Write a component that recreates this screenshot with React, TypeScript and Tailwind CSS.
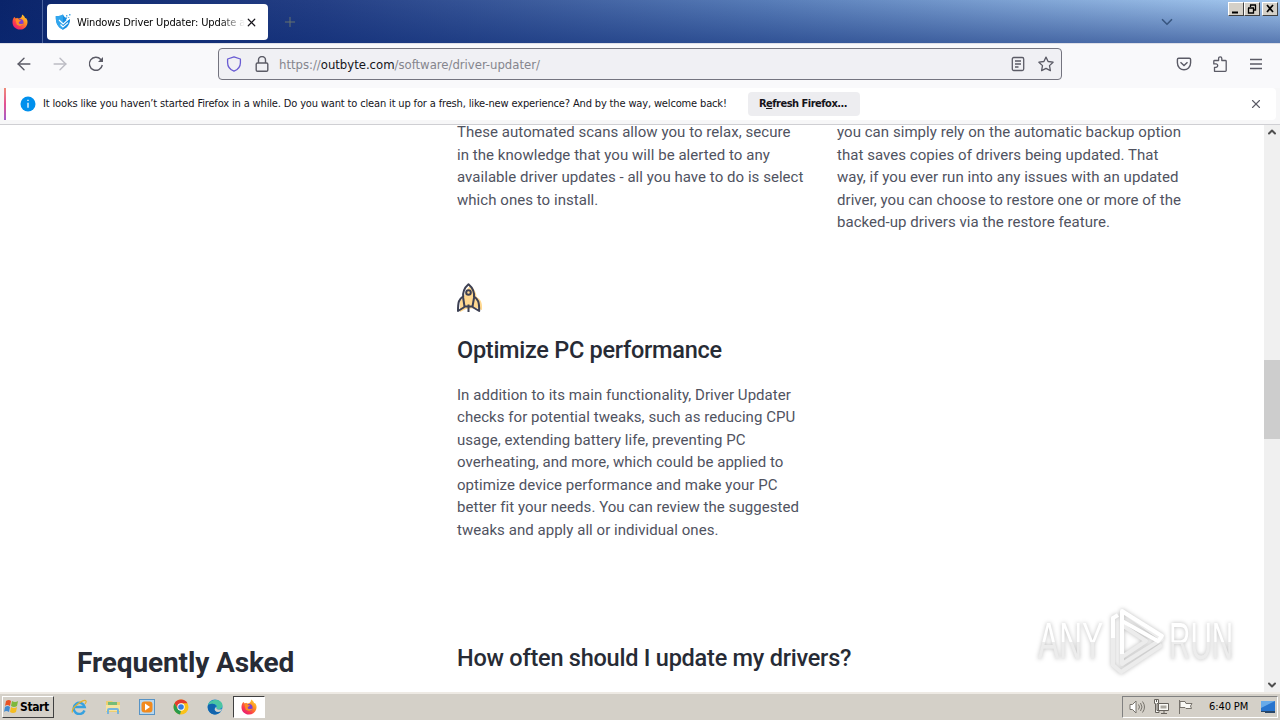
import type { ReactNode } from "react";
import { ArrowLeft, ArrowRight, ChevronDown, ChevronUp, Plus, X } from "lucide-react";

const scans = [
  "These automated scans allow you to relax, secure",
  "in the knowledge that you will be alerted to any",
  "available driver updates - all you have to do is select",
  "which ones to install.",
];

const backups = [
  "you can simply rely on the automatic backup option",
  "that saves copies of drivers being updated. That",
  "way, if you ever run into any issues with an updated",
  "driver, you can choose to restore one or more of the",
  "backed-up drivers via the restore feature.",
];

const performance = [
  "In addition to its main functionality, Driver Updater",
  "checks for potential tweaks, such as reducing CPU",
  "usage, extending battery life, preventing PC",
  "overheating, and more, which could be applied to",
  "optimize device performance and make your PC",
  "better fit your needs. You can review the suggested",
  "tweaks and apply all or individual ones.",
];

function Lines({ lines }: { lines: string[] }) {
  return (
    <p className="whitespace-nowrap text-[15px] leading-[22.5px] tracking-[0.045px] text-[#50535f]">
      {lines.map((line) => (
        <span key={line} className="block">{line}</span>
      ))}
    </p>
  );
}

function FirefoxIcon({ className }: { className?: string }) {
  return (
    <svg viewBox="0 0 16 16" className={className}>
      <defs>
        <linearGradient id="flame" x1="1" y1="0" x2="0.2" y2="1">
          <stop offset="0" stopColor="#ffe23d" />
          <stop offset="0.4" stopColor="#ff9320" />
          <stop offset="0.75" stopColor="#fb3a4e" />
          <stop offset="1" stopColor="#e3177d" />
        </linearGradient>
      </defs>
      <path d="M2.4 3.1 3.8 4.6 5.2 3.8 6 4.6 8 4.2 9.5 2.9 10.2 0.5C12.2 1.7 12.6 3 13.2 4.3L14 4C15.2 5.6 15.7 7 15.5 8.7 15.1 12.7 12 15.6 8 15.6 3.8 15.6.5 12.5.5 8.3.5 6.3 1.1 4.4 2.4 3.1Z" fill="url(#flame)" />
      <circle cx="8" cy="8.6" r="3.5" fill="#7b3fd0" />
      <path d="M3.5 5.2C5 4.5 6.7 5 7.4 6L9.3 6.5 7.2 7.7C6.4 8.3 6.6 9.7 8.1 10 9.3 10.3 10.3 9.4 11.5 9.8 10.3 12.4 6.5 12.8 4.5 10.3Z" fill="#ff8a24" />
    </svg>
  );
}

function WindowButton({ children, className = "" }: { children: ReactNode; className?: string }) {
  return (
    <div className={`h-[14px] border border-t-white border-l-white border-r-[#404040] border-b-[#404040] bg-[#d4d0c8] ${className}`}>
      <svg viewBox="0 0 14 12" className="h-3 w-[14px]" fill="none" stroke="#000">{children}</svg>
    </div>
  );
}

function TitleBar() {
  return (
    <div className="flex h-[43px] bg-[linear-gradient(to_bottom,transparent,rgba(10,40,115,0.5)),linear-gradient(to_right,#0a246a,#243f85_25%,#587db8_60%,#a6caf0)]">
      <div className="flex w-[43px] items-center justify-center border-r border-[#4c65a0] pr-[3px]">
        <FirefoxIcon className="size-4" />
      </div>
      <div className="mt-1 ml-1 flex h-9 w-[221px] items-center rounded bg-white pl-2">
        <svg viewBox="0 0 16 16" className="size-4 shrink-0">
          <path d="M8 .5C5.8 1.9 3.4 2.3.8 2.1.6 7.7 1.8 13 8 15.7 14 13.1 15.2 8.2 15 5L12.5 6.5 11 5.8 12.4 3.6 10.3 3.5 9.2 2.5Z" fill="#188ee2" />
          <path d="M8 15.7V.5C5.8 1.9 3.4 2.3.8 2.1.6 7.7 1.8 13 8 15.7Z" fill="#31a6ee" />
          <path d="m4 6 4.2 4L14 4.7M5.5 10.5 8 13l5-4.4" fill="none" stroke="#fff" strokeWidth="1.1" />
          <path d="M11 1h1.4v1.4H11zM14 0h1.5v1.5H14zM13.2 3h1v1h-1z" fill="#4eabe8" />
        </svg>
        <span className="mt-[3px] ml-[6px] w-[168px] overflow-hidden bg-[linear-gradient(to_right,#000_85%,transparent)] bg-clip-text font-['DejaVu_Sans_Condensed','Noto_Sans',sans-serif] text-[11px] tracking-[-0.12px] whitespace-nowrap text-transparent">
          Windows Driver Updater: Update a
        </span>
        <X className="size-[13px] shrink-0 text-[#15141a]" strokeWidth={2.2} />
      </div>
      <Plus className="mt-[14px] ml-[14px] size-4 text-[#66736e]" strokeWidth={1.5} />
      <ChevronDown className="mt-[13px] ml-auto size-[18px] text-[#395780]" strokeWidth={2.2} />
      <div className="mt-[2px] mr-[2px] ml-[52px] flex">
        <WindowButton className="w-4"><path d="M3 9.5h6" strokeWidth="2" /></WindowButton>
        <WindowButton className="w-4"><path d="M5 2h6M5.5 2v2M10.5 2v5H9M3 5h6M3.5 5v5h5V5" strokeWidth="1.3" /></WindowButton>
        <WindowButton className="ml-[2px] w-4"><path d="m4 2 6 7M10 2 4 9" strokeWidth="1.7" /></WindowButton>
      </div>
    </div>
  );
}

function Toolbar() {
  return (
    <div className="flex h-[45px] items-center border-t border-[#dedfe7] bg-[#f9f9fb] pb-1 text-[#5b5b66]">
      <ArrowLeft className="ml-[14px] size-5" strokeWidth={1.7} />
      <ArrowRight className="ml-4 size-5 text-[#bcbcc4]" strokeWidth={1.7} />
      <svg viewBox="0 0 16 16" className="ml-[18px] size-4" fill="none" stroke="currentColor" strokeWidth="1.4">
        <path d="M14.3 9A6.5 6.5 0 1 1 12.8 3.5L14 5" />
        <path d="M15 1v5h-5Z" fill="currentColor" stroke="none" />
      </svg>
      <div className="ml-[114px] flex h-8 w-[844px] items-center rounded border border-[#74747f] bg-[#f0f0f4] pl-[7px]">
        <svg viewBox="0 0 16 16" className="size-4" fill="none" stroke="#695bd3" strokeWidth="1.3">
          <path d="M8 .8 14.4 3v3.7c0 4.1-3 7.1-6.4 8.5-3.4-1.4-6.4-4.4-6.4-8.5V3Z" strokeLinejoin="round" />
        </svg>
        <svg viewBox="0 0 16 16" className="ml-3 size-4" fill="none" stroke="currentColor" strokeWidth="1.4">
          <rect x="2.2" y="7" width="11.6" height="8.2" rx="1.3" />
          <path d="M4.5 7V4a3.5 3.5 0 0 1 7 0v3" />
        </svg>
        <span className="mt-[2px] ml-[9px] font-['DejaVu_Sans_Condensed','Noto_Sans',sans-serif] text-[13px] tracking-[-0.02px] whitespace-nowrap text-[#85858d]">
          https://<span className="text-[#15141a]">outbyte.com</span>/software/driver-updater/
        </span>
        <svg viewBox="0 0 16 16" className="ml-auto size-4" fill="none" stroke="currentColor" strokeWidth="1.3">
          <rect x="2.3" y="1.5" width="11.4" height="13" rx="1.5" />
          <path d="M5 5h6M5 8h6M5 11h3.5" />
        </svg>
        <svg viewBox="0 0 16 16" className="mr-[7px] ml-3 size-4" fill="none" stroke="currentColor" strokeWidth="1.3">
          <path d="m8 1.1 2.1 4.4 5 .7-3.6 3.4.9 5L8 12.3l-4.4 2.3.9-5L.9 6.2l5-.7Z" strokeLinejoin="round" />
        </svg>
      </div>
      <svg viewBox="0 0 16 16" className="ml-[114px] size-4" fill="none" stroke="currentColor" strokeWidth="1.4">
        <path d="M2.7 2.3h10.6c.8 0 1.3.5 1.3 1.2v3.2c0 9.4-13.2 9.4-13.2 0V3.5c0-.7.5-1.2 1.3-1.2Z" />
        <path d="m4.5 6.2 3.5 3.4 3.5-3.4" />
      </svg>
      <svg viewBox="0 0 16 16" className="ml-5 size-4" fill="none" stroke="currentColor" strokeWidth="1.3">
        <path d="M2.5 15.3v-4H4a1.7 1.7 0 1 0 0-3.4H1.8V5.3c0-.5.3-.8.8-.8h4V2.4a1.6 1.6 0 0 1 3.2 0v2.1h3.6c.5 0 .8.3.8.8v9.2c0 .5-.3.8-.8.8Z" strokeLinejoin="round" />
      </svg>
      <svg viewBox="0 0 16 16" className="ml-5 size-4" stroke="currentColor" strokeWidth="1.3">
        <path d="M2 3.5h12M2 8h12M2 12.5h12" />
      </svg>
    </div>
  );
}

function Notification() {
  return (
    <div className="h-[37px] border-b border-[#cfcfd3] bg-[#f7f7f8] pr-1 pl-1">
      <div className="flex h-8 items-center rounded-r bg-white font-['DejaVu_Sans_Condensed','Noto_Sans',sans-serif] text-[11px] whitespace-nowrap text-[#15141a]">
        <div className="h-8 w-[2px] bg-linear-to-b from-[#ef8b78] via-[#e35091] to-[#a35ac9]" />
        <svg viewBox="0 0 16 16" className="ml-[14px] size-4">
          <circle cx="8" cy="8" r="7.5" fill="#0090ed" />
          <path d="M8 6.7v5M8 3.7v1.4" stroke="#fff" strokeWidth="1.3" />
        </svg>
        <span className="ml-[7px] w-[705px] tracking-[-0.15px]">
          It looks like you haven’t started Firefox in a while. Do you want to clean it up for a fresh, like-new experience? And by the way, welcome back!
        </span>
        <button className="h-6 w-[112px] rounded bg-[#ededf0] pr-[2px] font-bold tracking-[-0.5px]">
          R<span className="underline">e</span>fresh Firefox...
        </button>
        <X className="mr-[13px] ml-auto size-[14px] text-[#5b5b66]" strokeWidth={1.9} />
      </div>
    </div>
  );
}

function Rocket() {
  return (
    <svg viewBox="0 0 28 32" className="mt-px h-8 w-7" strokeLinejoin="round">
      <path d="M14 4c3.5 3 5.5 7 5.5 11 4.5 2.5 6 6 5.5 13l-6-2-10 1-6 3V19l4-4C8 10 10 6 14 4Z" fill="#ffd890" />
      <g fill="none" stroke="#3d4053" strokeWidth="2">
        <path d="M11.5 2.2C7 6 5.5 10.5 6.2 16L7.5 24.5H15.5L17 16C17.7 10.5 16 6 11.5 2.2Z" />
        <path d="M6 14.5C1.8 17.3 1 20 1 29L7.5 25M17 14.5C21.3 17.3 22.2 20 22.2 29L15.5 25M11.5 22.5V30" />
        <circle cx="11.5" cy="10.5" r="2.3" />
      </g>
    </svg>
  );
}

function Watermark() {
  return (
    <div className="absolute top-[479px] left-[1038px] flex h-[74px] w-[196px] items-center font-['Liberation_Sans',sans-serif] text-[52px] leading-none drop-shadow-[0_0_2px_#bdbdbd]">
      <span className="-mr-[42px] w-[112px] shrink-0 origin-left scale-x-[0.61] bg-[linear-gradient(#fff_52%,#ececec_52%)] bg-clip-text text-transparent">ANY</span>
      <svg viewBox="0 0 60 74" className="h-[74px] w-[60px] shrink-0" fill="none" stroke="#ececec" strokeWidth="4" strokeLinejoin="round">
        <path d="M14 10v50l40-25L14 7M5 12v50M5 61l8 7 41-27M14 53V21l24 16-24 16" />
        <path d="M5 34V14l5-3M14 50V7l40 25-4 5-36-20" stroke="#fff" />
      </svg>
      <span className="ml-[1px] w-[112px] shrink-0 origin-left scale-x-[0.57] bg-[linear-gradient(#fff_52%,#ececec_52%)] bg-clip-text text-transparent">RUN</span>
    </div>
  );
}

function Page() {
  return (
    <div className="relative flex h-[567px] overflow-hidden bg-white font-[Roboto,sans-serif] text-[#272b35]">
      <div className="w-[457px] shrink-0 pt-[518px] pl-[77px]">
        <h2 className="text-[28px] leading-10 font-bold tracking-[-0.12px] whitespace-nowrap">Frequently Asked</h2>
      </div>
      <div className="-mt-1 w-[807px] shrink-0">
        <div className="flex h-[160px]">
          <div className="w-[380px]"><Lines lines={scans} /></div>
          <Lines lines={backups} />
        </div>
        <Rocket />
        <h3 className="mt-5 mb-[17.5px] text-[23.5px] leading-8 font-medium tracking-[-0.28px] word-spacing-[1px]">Optimize PC performance</h3>
        <Lines lines={performance} />
        <h3 className="mt-[100.5px] text-[23.5px] leading-8 font-medium tracking-[-0.24px] whitespace-nowrap">How often should I update my drivers?</h3>
      </div>
      <div className="flex w-4 shrink-0 flex-col items-center bg-[#f0f0f0] pt-px pb-px text-[#505050]">
        <ChevronUp className="size-3" strokeWidth={4} />
        <div className="mt-[222px] h-[79px] w-4 bg-[#cdcdcd]" />
        <ChevronDown className="mt-auto size-3" strokeWidth={4} />
      </div>
      <Watermark />
    </div>
  );
}

function Taskbar() {
  return (
    <div className="flex h-7 items-center border-t-2 border-[#eeeae4] bg-[#d4d0c8] font-['DejaVu_Sans_Condensed','Noto_Sans',sans-serif]">
      <div className="ml-[2px] flex h-[22px] w-[52px] items-center border border-t-white border-l-white border-r-[#404040] border-b-[#404040]">
        <svg viewBox="0 0 16 16" className="size-4 shrink-0">
          <path d="M3 2q3-2 5 0L7 7Q4 5 2 7Z" fill="#e95324" />
          <path d="M9 2q3 2 6 0l-1 5q-3 2-6 0Z" fill="#7eb83d" />
          <path d="M2 8q3-2 5 0l-1 5q-3-2-5 0Z" fill="#438bd0" />
          <path d="M8 8q3 2 6 0l-1 5q-3 2-6 0Z" fill="#f4bd22" />
        </svg>
        <span className="ml-px text-[12px] font-bold tracking-[-0.4px]">Start</span>
      </div>
      <div className="ml-[17px] flex items-center gap-[18px]">
        <svg viewBox="0 0 16 16" className="size-4" fill="none">
          <path d="M13.5 11.5A5.6 5.6 0 1 1 13.7 8H4" stroke="#36a1df" strokeWidth="2.4" />
          <path d="M1.5 13.5C-.5 9 13-1 15 2q.6 1-1 3" stroke="#e4b22c" strokeWidth="1.2" />
        </svg>
        <svg viewBox="0 0 16 16" className="size-4">
          <path d="M1 2h6l1 1h7v10H1Z" fill="#edce72" />
          <path d="M3 3h9v3H3Z" fill="#75bc77" />
          <path d="M1 6h14v6H1Z" fill="#f6e4a0" />
          <path d="M3 15v-4q0-1 1-1h8q1 0 1 1v4" fill="none" stroke="#76b5dd" strokeWidth="2" />
        </svg>
        <svg viewBox="0 0 16 16" className="size-4">
          <rect x=".5" y=".5" width="15" height="15" fill="#b8d7ee" stroke="#5793c5" />
          <rect x="2.5" y="2.5" width="11" height="11" rx="3" fill="#f28a1d" />
          <path d="m6 4.5 5 3.5-5 3.5Z" fill="#fff" />
        </svg>
        <svg viewBox="0 0 16 16" className="size-4">
          <circle cx="8" cy="8" r="7.5" fill="#fbc218" />
          <path d="M1.5 4.3A7.5 7.5 0 0 1 14.5 4.3H8L4.8 10Z" fill="#e33b2e" />
          <path d="M1.5 4.3 4.8 10 8 11.7l-1 3.7A7.5 7.5 0 0 1 1.5 4.3Z" fill="#299b4c" />
          <circle cx="8" cy="8" r="3.7" fill="#fff" />
          <circle cx="8" cy="8" r="2.8" fill="#347de0" />
        </svg>
        <svg viewBox="0 0 16 16" className="size-4">
          <circle cx="8" cy="8" r="7.5" fill="#1687cf" />
          <path d="M1 6C3-1 16-.5 15.5 7 15.3 10 11 11 9.5 9.5L10 7Q7 3 1 6Z" fill="#4bc5a3" />
          <path d="M1 6q6-3 8 1-4 4 2 6l3-1Q11 16 7 15.4C3 15 0 11 1 6Z" fill="#1264ad" />
          <path d="M9.8 7.5q-1.4 2 1.2 2.9 2.3.5 4-.7l-1 2.6q-4 2-6-.9-1-2 1.8-3.9Z" fill="#d4d0c8" />
        </svg>
      </div>
      <div className="ml-[10px] flex h-[22px] w-8 items-center justify-center border border-t-[#404040] border-l-[#404040] border-r-white border-b-white bg-white">
        <FirefoxIcon className="size-4" />
      </div>
      <div className="mr-[2px] ml-auto flex h-[22px] w-[156px] items-center border border-t-[#808080] border-l-[#808080] border-r-white border-b-white pl-[6px]">
        <svg viewBox="0 0 16 16" className="size-4" fill="#fff" stroke="#77736c">
          <path d="M1 5.5h2.5L7 2v12l-3.5-3.5H1Z" />
          <path d="M9.5 5.5q2 2.5 0 5M11.5 4q3 4 0 8M13.5 2.5q4 5.5 0 11" fill="none" />
        </svg>
        <svg viewBox="0 0 16 16" className="ml-2 size-4" fill="#f9f9f5" stroke="#66625c">
          <path d="M5.5 4.5h10v7h-10ZM8 14.5h6M11 12v2" />
          <path d="M7.5 6.5h6v3h-6Z" fill="#aaa79f" stroke="none" />
          <path d="M1.5.5v4h1v9H6v-2H4v-7h1.5v-4ZM3.5 1v2" />
        </svg>
        <svg viewBox="0 0 16 16" className="ml-2 size-4" fill="#f9f9f5" stroke="#77736c">
          <path d="M2.5 1v14M3 2.5h5l1 2h6L13.5 7l1 2.5H9l-1-1H3Z" />
        </svg>
        <span className="ml-4 w-[45px] text-[11px] tracking-[-0.1px] whitespace-nowrap">6:40 PM</span>
        <svg viewBox="0 0 16 16" className="ml-[6px] size-4 shrink-0">
          <path d="M1 2h14v10H1Z" fill="#2774ce" />
          <path d="M1 2h14L1 9Z" fill="#67aae9" />
          <path d="M1 12h14v2H5v-1H1Z" fill="#294667" />
        </svg>
      </div>
    </div>
  );
}

export default function App() {
  return (
    <div className="h-[720px] w-[1280px] overflow-hidden bg-white">
      <TitleBar />
      <Toolbar />
      <Notification />
      <Page />
      <Taskbar />
    </div>
  );
}
